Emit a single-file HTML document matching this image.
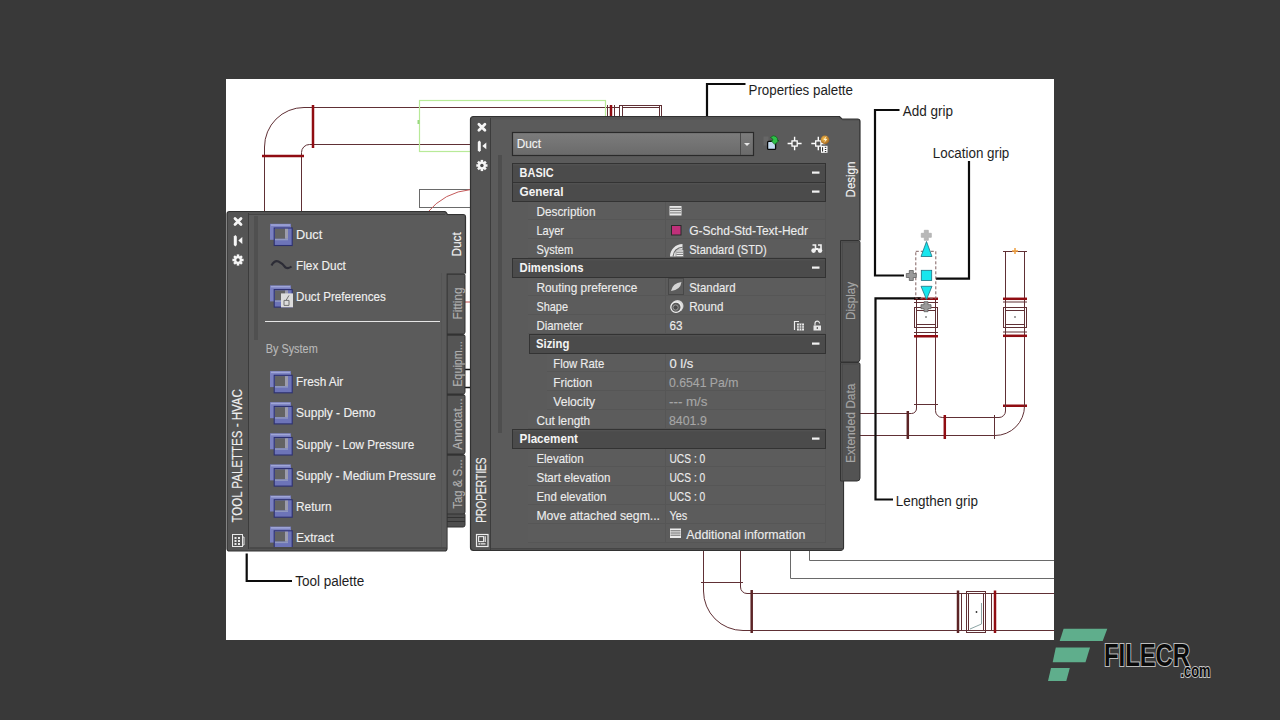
<!DOCTYPE html><html><head><meta charset="utf-8"><style>
html,body{margin:0;padding:0;width:1280px;height:720px;overflow:hidden;background:#393939;}
svg{position:absolute;left:0;top:0;}
text{font-family:"Liberation Sans", sans-serif;}
</style></head><body>
<svg width="1280" height="720" viewBox="0 0 1280 720">
<rect x="226" y="79" width="828" height="561" fill="#ffffff"/>
<path d="M304 107.5 A39.5 39.5 0 0 0 264.5 147 L264.5 212" stroke="#603035" stroke-width="1" fill="none" />
<path d="M309.5 144.5 A8 8 0 0 0 301.5 152.5 L301.5 212" stroke="#603035" stroke-width="1" fill="none" />
<line x1="304" y1="107.5" x2="619" y2="107.5" stroke="#603035" stroke-width="1"/>
<line x1="309.5" y1="144.5" x2="470" y2="144.5" stroke="#603035" stroke-width="1"/>
<line x1="313" y1="105" x2="313" y2="148" stroke="#900c12" stroke-width="2.5"/>
<line x1="262" y1="156" x2="304" y2="156" stroke="#900c12" stroke-width="2.5"/>
<rect x="419.5" y="100.5" width="186" height="51" stroke="#b8ea98" stroke-width="1.2" fill="none" />
<line x1="418.5" y1="120" x2="418.5" y2="124" stroke="#9ad880" stroke-width="2"/>
<line x1="607.5" y1="105" x2="607.5" y2="117" stroke="#603035" stroke-width="1"/>
<line x1="611" y1="105" x2="611" y2="117" stroke="#900c12" stroke-width="2.5"/>
<line x1="614.5" y1="105" x2="614.5" y2="117" stroke="#603035" stroke-width="1"/>
<line x1="619.5" y1="105" x2="619.5" y2="117" stroke="#603035" stroke-width="1"/>
<line x1="622.5" y1="105" x2="622.5" y2="117" stroke="#603035" stroke-width="1"/>
<line x1="659.5" y1="105" x2="659.5" y2="117" stroke="#603035" stroke-width="1"/>
<line x1="661.5" y1="105" x2="661.5" y2="117" stroke="#603035" stroke-width="1"/>
<line x1="619.5" y1="105.5" x2="661.5" y2="105.5" stroke="#603035" stroke-width="1"/>
<line x1="622.5" y1="107.5" x2="659.5" y2="107.5" stroke="#603035" stroke-width="1"/>
<rect x="419.5" y="189.5" width="60" height="18" stroke="#6a6a6a" stroke-width="1" fill="none" />
<path d="M427 213 A65 65 0 0 1 471 189.5" stroke="#c45a5a" stroke-width="1" fill="none" />
<line x1="465" y1="302" x2="470" y2="302" stroke="#c04848" stroke-width="1"/>
<line x1="465" y1="369.5" x2="470" y2="369.5" stroke="#101010" stroke-width="1.5"/>
<line x1="465" y1="387.5" x2="470" y2="387.5" stroke="#101010" stroke-width="1.5"/>
<path d="M703.5 551 L703.5 591 A39.5 39.5 0 0 0 743 630.5 L1054 630.5" stroke="#603035" stroke-width="1" fill="none" />
<path d="M740.5 551 L740.5 587 A6.5 6.5 0 0 0 747 593.5 L1054 593.5" stroke="#603035" stroke-width="1" fill="none" />
<line x1="701" y1="582.5" x2="743" y2="582.5" stroke="#603035" stroke-width="1"/>
<line x1="751.7" y1="590" x2="751.7" y2="633" stroke="#5c2426" stroke-width="2.5"/>
<path d="M790.5 551 L790.5 578.5 L1054 578.5" stroke="#6a6a6a" stroke-width="1" fill="none" />
<path d="M809.5 551 L809.5 560.5 L1054 560.5" stroke="#6a6a6a" stroke-width="1" fill="none" />
<line x1="958" y1="590.5" x2="958" y2="633" stroke="#5c2426" stroke-width="2.5"/>
<line x1="995" y1="590.5" x2="995" y2="633" stroke="#900c12" stroke-width="2.5"/>
<line x1="961.5" y1="593" x2="961.5" y2="631" stroke="#603035" stroke-width="1"/>
<line x1="991.5" y1="593" x2="991.5" y2="631" stroke="#603035" stroke-width="1"/>
<rect x="966.5" y="591.5" width="19" height="41" stroke="#603035" stroke-width="1" fill="none" />
<rect x="968.5" y="593.5" width="15" height="37" stroke="#603035" stroke-width="1" fill="none" />
<path d="M970 629 L981.5 624 L981.5 603" stroke="#6e8e8e" stroke-width="0.8" fill="none" />
<circle cx="976.5" cy="612" r="0.9" fill="#303030"/>
<line x1="916.5" y1="298" x2="916.5" y2="408" stroke="#603035" stroke-width="1"/>
<line x1="935.5" y1="298" x2="935.5" y2="410.5" stroke="#603035" stroke-width="1"/>
<line x1="914" y1="298.75" x2="938" y2="298.75" stroke="#900c12" stroke-width="2.5"/>
<line x1="914" y1="302.5" x2="938" y2="302.5" stroke="#603035" stroke-width="1"/>
<rect x="914.5" y="307.5" width="23" height="20" stroke="#603035" stroke-width="1" fill="none" />
<rect x="916.5" y="310.5" width="19" height="14" stroke="#603035" stroke-width="1" fill="none" />
<line x1="914" y1="332.5" x2="938" y2="332.5" stroke="#603035" stroke-width="1"/>
<line x1="914" y1="336.25" x2="938" y2="336.25" stroke="#900c12" stroke-width="2.5"/>
<line x1="914" y1="404.5" x2="938" y2="404.5" stroke="#603035" stroke-width="1"/>
<path d="M916.5 408 A5 5 0 0 1 911.5 413.5 L860 413.5" stroke="#603035" stroke-width="1" fill="none" />
<path d="M935.5 410.5 A6.8 6.8 0 0 0 942.3 417.5 L999 417.5 A6.5 6.5 0 0 0 1005.5 411" stroke="#603035" stroke-width="1" fill="none" />
<path d="M860 435.5 L995 435.5 A29.5 29.5 0 0 0 1024.5 406" stroke="#603035" stroke-width="1" fill="none" />
<line x1="907.8" y1="411" x2="907.8" y2="439" stroke="#5c2426" stroke-width="2.5"/>
<line x1="944.8" y1="415" x2="944.8" y2="439" stroke="#900c12" stroke-width="2.5"/>
<line x1="994.5" y1="415" x2="994.5" y2="439" stroke="#603035" stroke-width="1"/>
<line x1="1003" y1="405.75" x2="1027" y2="405.75" stroke="#900c12" stroke-width="2.5"/>
<line x1="1005.5" y1="251" x2="1005.5" y2="411" stroke="#603035" stroke-width="1"/>
<line x1="1024.5" y1="251" x2="1024.5" y2="406.5" stroke="#603035" stroke-width="1"/>
<line x1="1003" y1="251.5" x2="1027" y2="251.5" stroke="#603035" stroke-width="1"/>
<line x1="1003" y1="298.8" x2="1027" y2="298.8" stroke="#900c12" stroke-width="2.5"/>
<line x1="1003" y1="302" x2="1027" y2="302" stroke="#603035" stroke-width="1"/>
<rect x="1003.5" y="307.5" width="23" height="20" stroke="#603035" stroke-width="1" fill="none" />
<rect x="1005.5" y="310.5" width="19" height="14" stroke="#603035" stroke-width="1" fill="none" />
<line x1="1003" y1="332" x2="1027" y2="332" stroke="#603035" stroke-width="1"/>
<line x1="1003" y1="335.8" x2="1027" y2="335.8" stroke="#900c12" stroke-width="2.5"/>
<path d="M1012 251 h6 M1015 248 v6" stroke="#f0a040" stroke-width="1.5"/>
<circle cx="926" cy="317" r="0.8" fill="#303030"/>
<circle cx="1015" cy="317" r="0.8" fill="#303030"/>
<path d="M707 117 L707 84 L745.5 84" stroke="#0c0c0c" stroke-width="2.2" fill="none" />
<path d="M899.5 110 L875 110 L875 275.5 L904 275.5" stroke="#0c0c0c" stroke-width="2.2" fill="none" />
<path d="M936 278.7 L969 278.7 L969 161" stroke="#0c0c0c" stroke-width="2.2" fill="none" />
<path d="M921 298.3 L875.5 298.3 L875.5 499.5 L893 499.5" stroke="#0c0c0c" stroke-width="2.2" fill="none" />
<path d="M246.7 553.5 L246.7 581 L292 581" stroke="#0c0c0c" stroke-width="2.2" fill="none" />
<rect x="915.8" y="251.3" width="20" height="47" stroke="#806060" stroke-width="1" fill="none" stroke-dasharray="3,2"/>
<path d="M924.3 230.3 H928.3 V233.3 H931.3 V237.3 H928.3 V240.3 H924.3 V237.3 H921.3 V233.3 H924.3 Z" fill="#b8b8b8" stroke="#b0b0b0" stroke-width="0.8"/>
<path d="M926.5 241.5 L932 256.5 L921 256.5 Z" fill="#18e6ee" stroke="#207080" stroke-width="0.8"/>
<rect x="921.3" y="270.3" width="10.4" height="10.2" fill="#18e6ee" stroke="#207080" stroke-width="0.8"/>
<path d="M921 286.3 L932 286.3 L926.5 299.5 Z" fill="#18e6ee" stroke="#207080" stroke-width="0.8"/>
<path d="M909.3 270.5 H913.3 V273.5 H916.3 V277.5 H913.3 V280.5 H909.3 V277.5 H906.3 V273.5 H909.3 Z" fill="#9a9a9a" stroke="#606060" stroke-width="0.8"/>
<path d="M924.0 301.7 H928.0 V304.7 H931.0 V308.7 H928.0 V311.7 H924.0 V308.7 H921.0 V304.7 H924.0 Z" fill="#9a9a9a" stroke="#606060" stroke-width="0.8"/>
<text transform="translate(748.5,95) scale(1,1.06)" x="0" y="0" font-size="13" fill="#1e1e1e" font-weight="normal" textLength="104.5" lengthAdjust="spacingAndGlyphs" >Properties palette</text>
<text transform="translate(902.8,115.5) scale(1,1.06)" x="0" y="0" font-size="13" fill="#1e1e1e" font-weight="normal" textLength="50.2" lengthAdjust="spacingAndGlyphs" >Add grip</text>
<text transform="translate(932.8,157.8) scale(1,1.06)" x="0" y="0" font-size="13" fill="#1e1e1e" font-weight="normal" textLength="76.5" lengthAdjust="spacingAndGlyphs" >Location grip</text>
<text transform="translate(895.7,506.2) scale(1,1.06)" x="0" y="0" font-size="13" fill="#1e1e1e" font-weight="normal" textLength="82.2" lengthAdjust="spacingAndGlyphs" >Lengthen grip</text>
<text transform="translate(295.2,585.5) scale(1,1.06)" x="0" y="0" font-size="13" fill="#1e1e1e" font-weight="normal" textLength="69" lengthAdjust="spacingAndGlyphs" >Tool palette</text>
<path d="M445 513 H463 a2 2 0 0 1 2 2 V525 a2 2 0 0 1 -2 2 H445 Z" fill="#4e4e4e" stroke="#323232" stroke-width="1"/>
<path d="M446 517.5 H465 M446 521.5 H465" stroke="#323232" stroke-width="1"/>
<path d="M445.5 273.5 H463 a2 2 0 0 1 2 2 V332 a2 2 0 0 1 -2 2 H445.5 Z" fill="#555555" stroke="#323232" stroke-width="1"/>
<line x1="446" y1="274.5" x2="464" y2="274.5" stroke="#3c3c3c" stroke-width="1"/>
<path d="M445.5 334.5 H463 a2 2 0 0 1 2 2 V392 a2 2 0 0 1 -2 2 H445.5 Z" fill="#555555" stroke="#323232" stroke-width="1"/>
<line x1="446" y1="335.5" x2="464" y2="335.5" stroke="#3c3c3c" stroke-width="1"/>
<path d="M445.5 394.5 H463 a2 2 0 0 1 2 2 V452 a2 2 0 0 1 -2 2 H445.5 Z" fill="#555555" stroke="#323232" stroke-width="1"/>
<line x1="446" y1="395.5" x2="464" y2="395.5" stroke="#3c3c3c" stroke-width="1"/>
<path d="M445.5 454.5 H463 a2 2 0 0 1 2 2 V512 a2 2 0 0 1 -2 2 H445.5 Z" fill="#555555" stroke="#323232" stroke-width="1"/>
<line x1="446" y1="455.5" x2="464" y2="455.5" stroke="#3c3c3c" stroke-width="1"/>
<path d="M229.5 211.5 H444.5 a2 2 0 0 1 1.6 0.8 L447.5 214.5 H463 a2.5 2.5 0 0 1 2.5 2.5 V273 H447 V548.5 a2.5 2.5 0 0 1 -2.5 2.5 H229.5 a2.5 2.5 0 0 1 -2.5 -2.5 V214 a2.5 2.5 0 0 1 2.5 -2.5 Z" fill="#545454" stroke="#323232" stroke-width="1.2"/>
<path d="M249 214 H444.5 L446.5 215.5 H464.5 V273.5 H446.5 V547.5 H249 Z" fill="#5b5b5b"/>
<line x1="248.5" y1="213" x2="248.5" y2="549" stroke="#3c3c3c" stroke-width="1"/>
<line x1="249" y1="214.5" x2="445" y2="214.5" stroke="#444444" stroke-width="1"/>
<line x1="249.5" y1="548" x2="446" y2="548" stroke="#464646" stroke-width="1.5"/>
<line x1="441.5" y1="273" x2="441.5" y2="547" stroke="#555555" stroke-width="1"/>
<rect x="254" y="216" width="4" height="124" fill="#505050"/>
<path d="M235.0 218.6 L241.0 224.6 M241.0 218.6 L235.0 224.6" stroke="#f6f6f6" stroke-width="2.8" stroke-linecap="round"/>
<path d="M233.8 236.6 L235.3 235.1 L236.8 236.6 V245.1 L235.3 246.6 L233.8 245.1 Z" fill="#f6f6f6"/>
<path d="M242.3 237.1 V243.9 L238.3 240.6 Z" fill="#f6f6f6"/>
<g transform="translate(238,260)"><circle r="3.9" fill="#f6f6f6"/><rect x="-1.25" y="-5.6" width="2.5" height="11.2" fill="#f6f6f6" transform="rotate(0)"/><rect x="-1.25" y="-5.6" width="2.5" height="11.2" fill="#f6f6f6" transform="rotate(45)"/><rect x="-1.25" y="-5.6" width="2.5" height="11.2" fill="#f6f6f6" transform="rotate(90)"/><rect x="-1.25" y="-5.6" width="2.5" height="11.2" fill="#f6f6f6" transform="rotate(135)"/><circle r="1.7" fill="#4a4a4a"/></g>
<text transform="translate(242.4,522.6) rotate(-90) scale(1,1.2)" font-size="11.5" fill="#eeeeee" font-weight="normal" text-anchor="start" textLength="133.5" lengthAdjust="spacingAndGlyphs" stroke="#eeeeee" stroke-width="0.12">TOOL PALETTES - HVAC</text>
<rect x="232.5" y="534.5" width="10" height="12" fill="none" stroke="#e8e8e8" stroke-width="1"/>
<path d="M242.5 537 h1.5 v8 h-1.5" fill="none" stroke="#e8e8e8" stroke-width="1"/>
<rect x="234.5" y="537" width="2" height="2" fill="#e8e8e8"/>
<rect x="238.0" y="537" width="2" height="2" fill="#e8e8e8"/>
<rect x="234.5" y="540" width="2" height="2" fill="#e8e8e8"/>
<rect x="238.0" y="540" width="2" height="2" fill="#e8e8e8"/>
<rect x="234.5" y="543" width="2" height="2" fill="#e8e8e8"/>
<rect x="238.0" y="543" width="2" height="2" fill="#e8e8e8"/>
<text transform="translate(461.5,303.5) rotate(-90) scale(1,1.08)" font-size="11.8" fill="#b0b0b0" font-weight="normal" text-anchor="middle" textLength="32" lengthAdjust="spacingAndGlyphs" stroke="#b0b0b0" stroke-width="0.12">Fitting</text>
<text transform="translate(461.5,364.0) rotate(-90) scale(1,1.08)" font-size="11.8" fill="#b0b0b0" font-weight="normal" text-anchor="middle" textLength="45.7" lengthAdjust="spacingAndGlyphs" stroke="#b0b0b0" stroke-width="0.12">Equipm...</text>
<text transform="translate(461.5,424.0) rotate(-90) scale(1,1.08)" font-size="11.8" fill="#b0b0b0" font-weight="normal" text-anchor="middle" textLength="51.5" lengthAdjust="spacingAndGlyphs" stroke="#b0b0b0" stroke-width="0.12">Annotat...</text>
<text transform="translate(461.5,484.0) rotate(-90) scale(1,1.08)" font-size="11.8" fill="#b0b0b0" font-weight="normal" text-anchor="middle" textLength="49.3" lengthAdjust="spacingAndGlyphs" stroke="#b0b0b0" stroke-width="0.12">Tag &amp; S...</text>
<text transform="translate(460.5,244.4) rotate(-90) scale(1,1.08)" font-size="12" fill="#f6f6f6" font-weight="normal" text-anchor="middle" textLength="24.4" lengthAdjust="spacingAndGlyphs" stroke="#f6f6f6" stroke-width="0.12">Duct</text>
<defs><clipPath id="tpc"><rect x="249" y="214" width="197" height="333"/></clipPath></defs><g clip-path="url(#tpc)">
<rect x="270" y="223.8" width="21" height="16" fill="#7a80c0"/>
<rect x="271" y="224.3" width="19" height="1.5" fill="#a0a6d8"/>
<rect x="274.2" y="228.0" width="18" height="17.5" fill="#6d74b8" stroke="#2c3070" stroke-width="1.1"/>
<rect x="275" y="228.8" width="11" height="10" fill="#636363"/>
<rect x="285" y="228.8" width="3" height="10" fill="#9c9cac"/>
<rect x="275" y="238.8" width="13" height="1.5" fill="#9098c0"/>
<text transform="translate(296.0,239) scale(1,1.1)" x="0" y="0" font-size="11.8" fill="#f0f0f0" font-weight="normal" textLength="26.2" lengthAdjust="spacingAndGlyphs" stroke="#f0f0f0" stroke-width="0.12" >Duct</text>
<path d="M271.5 265.5 Q274.5 260 278.5 261.5 Q282 263 285.5 267.5 Q288.5 269 291.5 266.5" stroke="#2c2c36" stroke-width="2.2" fill="none"/>
<text transform="translate(296.0,270) scale(1,1.1)" x="0" y="0" font-size="11.8" fill="#f0f0f0" font-weight="normal" textLength="49.8" lengthAdjust="spacingAndGlyphs" stroke="#f0f0f0" stroke-width="0.12" >Flex Duct</text>
<rect x="270" y="285.40000000000003" width="21" height="16" fill="#7a80c0"/>
<rect x="271" y="285.90000000000003" width="19" height="1.5" fill="#a0a6d8"/>
<rect x="274.2" y="289.6" width="18" height="17.5" fill="#6d74b8" stroke="#2c3070" stroke-width="1.1"/>
<rect x="275" y="290.40000000000003" width="11" height="10" fill="#636363"/>
<rect x="285" y="290.40000000000003" width="3" height="10" fill="#9c9cac"/>
<rect x="275" y="300.40000000000003" width="13" height="1.5" fill="#9098c0"/>
<rect x="281" y="293.40000000000003" width="12" height="14" fill="#dcdcdc"/>
<path d="M284 305.40000000000003 v-5 h5 v5 z M289 295.40000000000003 l-3 5" stroke="#707070" stroke-width="1" fill="none"/>
<text transform="translate(296.0,300.6) scale(1,1.1)" x="0" y="0" font-size="11.8" fill="#f0f0f0" font-weight="normal" textLength="89.8" lengthAdjust="spacingAndGlyphs" stroke="#f0f0f0" stroke-width="0.12" >Duct Preferences</text>
<rect x="270" y="371.1" width="21" height="16" fill="#7a80c0"/>
<rect x="271" y="371.6" width="19" height="1.5" fill="#a0a6d8"/>
<rect x="274.2" y="375.3" width="18" height="17.5" fill="#6d74b8" stroke="#2c3070" stroke-width="1.1"/>
<rect x="275" y="376.1" width="11" height="10" fill="#636363"/>
<rect x="285" y="376.1" width="3" height="10" fill="#9c9cac"/>
<rect x="275" y="386.1" width="13" height="1.5" fill="#9098c0"/>
<text transform="translate(296.0,386.3) scale(1,1.1)" x="0" y="0" font-size="11.8" fill="#f0f0f0" font-weight="normal" textLength="47.3" lengthAdjust="spacingAndGlyphs" stroke="#f0f0f0" stroke-width="0.12" >Fresh Air</text>
<rect x="270" y="402.2" width="21" height="16" fill="#7a80c0"/>
<rect x="271" y="402.7" width="19" height="1.5" fill="#a0a6d8"/>
<rect x="274.2" y="406.4" width="18" height="17.5" fill="#6d74b8" stroke="#2c3070" stroke-width="1.1"/>
<rect x="275" y="407.2" width="11" height="10" fill="#636363"/>
<rect x="285" y="407.2" width="3" height="10" fill="#9c9cac"/>
<rect x="275" y="417.2" width="13" height="1.5" fill="#9098c0"/>
<text transform="translate(296.0,417.4) scale(1,1.1)" x="0" y="0" font-size="11.8" fill="#f0f0f0" font-weight="normal" textLength="79.5" lengthAdjust="spacingAndGlyphs" stroke="#f0f0f0" stroke-width="0.12" >Supply - Demo</text>
<rect x="270" y="433.3" width="21" height="16" fill="#7a80c0"/>
<rect x="271" y="433.8" width="19" height="1.5" fill="#a0a6d8"/>
<rect x="274.2" y="437.5" width="18" height="17.5" fill="#6d74b8" stroke="#2c3070" stroke-width="1.1"/>
<rect x="275" y="438.3" width="11" height="10" fill="#636363"/>
<rect x="285" y="438.3" width="3" height="10" fill="#9c9cac"/>
<rect x="275" y="448.3" width="13" height="1.5" fill="#9098c0"/>
<text transform="translate(296.0,448.5) scale(1,1.1)" x="0" y="0" font-size="11.8" fill="#f0f0f0" font-weight="normal" textLength="118.3" lengthAdjust="spacingAndGlyphs" stroke="#f0f0f0" stroke-width="0.12" >Supply - Low Pressure</text>
<rect x="270" y="464.40000000000003" width="21" height="16" fill="#7a80c0"/>
<rect x="271" y="464.90000000000003" width="19" height="1.5" fill="#a0a6d8"/>
<rect x="274.2" y="468.6" width="18" height="17.5" fill="#6d74b8" stroke="#2c3070" stroke-width="1.1"/>
<rect x="275" y="469.40000000000003" width="11" height="10" fill="#636363"/>
<rect x="285" y="469.40000000000003" width="3" height="10" fill="#9c9cac"/>
<rect x="275" y="479.40000000000003" width="13" height="1.5" fill="#9098c0"/>
<text transform="translate(296.0,479.6) scale(1,1.1)" x="0" y="0" font-size="11.8" fill="#f0f0f0" font-weight="normal" textLength="139.8" lengthAdjust="spacingAndGlyphs" stroke="#f0f0f0" stroke-width="0.12" >Supply - Medium Pressure</text>
<rect x="270" y="495.5" width="21" height="16" fill="#7a80c0"/>
<rect x="271" y="496.0" width="19" height="1.5" fill="#a0a6d8"/>
<rect x="274.2" y="499.7" width="18" height="17.5" fill="#6d74b8" stroke="#2c3070" stroke-width="1.1"/>
<rect x="275" y="500.5" width="11" height="10" fill="#636363"/>
<rect x="285" y="500.5" width="3" height="10" fill="#9c9cac"/>
<rect x="275" y="510.5" width="13" height="1.5" fill="#9098c0"/>
<text transform="translate(296.0,510.7) scale(1,1.1)" x="0" y="0" font-size="11.8" fill="#f0f0f0" font-weight="normal" textLength="35.599999999999994" lengthAdjust="spacingAndGlyphs" stroke="#f0f0f0" stroke-width="0.12" >Return</text>
<rect x="270" y="526.5999999999999" width="21" height="16" fill="#7a80c0"/>
<rect x="271" y="527.0999999999999" width="19" height="1.5" fill="#a0a6d8"/>
<rect x="274.2" y="530.8" width="18" height="17.5" fill="#6d74b8" stroke="#2c3070" stroke-width="1.1"/>
<rect x="275" y="531.5999999999999" width="11" height="10" fill="#636363"/>
<rect x="285" y="531.5999999999999" width="3" height="10" fill="#9c9cac"/>
<rect x="275" y="541.5999999999999" width="13" height="1.5" fill="#9098c0"/>
<text transform="translate(296.0,541.8) scale(1,1.1)" x="0" y="0" font-size="11.8" fill="#f0f0f0" font-weight="normal" textLength="37.8" lengthAdjust="spacingAndGlyphs" stroke="#f0f0f0" stroke-width="0.12" >Extract</text>
</g>
<line x1="265" y1="321.5" x2="440" y2="321.5" stroke="#e6e6e6" stroke-width="1.2"/>
<text transform="translate(265.7,352.5) scale(1,1.08)" x="0" y="0" font-size="11.5" fill="#b8b8b8" font-weight="normal" textLength="52" lengthAdjust="spacingAndGlyphs" stroke="#b8b8b8" stroke-width="0.12" >By System</text>
<path d="M473.5 116.5 H839.5 L842 119 H857.5 a2.5 2.5 0 0 1 2.5 2.5 V240 H843.5 V547.5 a3 3 0 0 1 -3 3 H473.5 a3 3 0 0 1 -3 -3 V119.5 a3 3 0 0 1 3 -3 Z" fill="#545454" stroke="#323232" stroke-width="1.2"/>
<path d="M491 119.5 H841.5 L843 121 H859 V240.5 H843 V549.5 H491 Z" fill="#5b5b5b"/>
<path d="M840.5 240.5 H858 a2 2 0 0 1 2 2 V359 a3 3 0 0 1 -3 3 H840.5 Z" fill="#535353" stroke="#323232" stroke-width="1"/>
<path d="M841.5 242 H858.5 M842.5 242 V361" stroke="#4a4a4a" stroke-width="1"/>
<path d="M840.5 362.5 H858 a2 2 0 0 1 2 2 V478 a3 3 0 0 1 -3 3 H840.5 Z" fill="#535353" stroke="#323232" stroke-width="1"/>
<path d="M841.5 364 H858.5 M842.5 364 V480" stroke="#4a4a4a" stroke-width="1"/>
<line x1="490.5" y1="118" x2="490.5" y2="550" stroke="#3c3c3c" stroke-width="1"/>
<line x1="491" y1="548.8" x2="843" y2="548.8" stroke="#464646" stroke-width="1.5"/>
<rect x="498" y="155" width="4" height="278" fill="#4e4e4e"/>
<path d="M478.9 124.2 L484.9 130.2 M484.9 124.2 L478.9 130.2" stroke="#f6f6f6" stroke-width="2.8" stroke-linecap="round"/>
<path d="M477.8 142 L479.3 140.5 L480.8 142 V150.5 L479.3 152 L477.8 150.5 Z" fill="#f6f6f6"/>
<path d="M486.3 142.5 V149.3 L482.3 146 Z" fill="#f6f6f6"/>
<g transform="translate(481.9,165.5)"><circle r="3.9" fill="#f6f6f6"/><rect x="-1.25" y="-5.6" width="2.5" height="11.2" fill="#f6f6f6" transform="rotate(0)"/><rect x="-1.25" y="-5.6" width="2.5" height="11.2" fill="#f6f6f6" transform="rotate(45)"/><rect x="-1.25" y="-5.6" width="2.5" height="11.2" fill="#f6f6f6" transform="rotate(90)"/><rect x="-1.25" y="-5.6" width="2.5" height="11.2" fill="#f6f6f6" transform="rotate(135)"/><circle r="1.7" fill="#4a4a4a"/></g>
<text transform="translate(485.8,522.8) rotate(-90) scale(1,1.18)" font-size="11.8" fill="#eeeeee" font-weight="normal" text-anchor="start" textLength="65.4" lengthAdjust="spacingAndGlyphs" stroke="#eeeeee" stroke-width="0.12">PROPERTIES</text>
<rect x="476.5" y="534.5" width="11.5" height="12" fill="none" stroke="#ececec" stroke-width="1.2"/>
<rect x="478.6" y="536.6" width="5" height="5" fill="none" stroke="#ececec" stroke-width="1.1"/>
<path d="M485.2 536.2 v5.8 M480.5 543.8 h5 M479.2 543 v1.8" stroke="#ececec" stroke-width="1.2"/>
<text transform="translate(855,179.5) rotate(-90) scale(1,1.08)" font-size="12" fill="#f2f2f2" font-weight="normal" text-anchor="middle" textLength="35.9" lengthAdjust="spacingAndGlyphs" stroke="#f2f2f2" stroke-width="0.12">Design</text>
<text transform="translate(855,301) rotate(-90) scale(1,1.08)" font-size="12" fill="#a6a6a6" font-weight="normal" text-anchor="middle" textLength="38" lengthAdjust="spacingAndGlyphs" stroke="#a6a6a6" stroke-width="0.12">Display</text>
<text transform="translate(855,423.2) rotate(-90) scale(1,1.08)" font-size="12" fill="#a6a6a6" font-weight="normal" text-anchor="middle" textLength="79.4" lengthAdjust="spacingAndGlyphs" stroke="#a6a6a6" stroke-width="0.12">Extended Data</text>
<defs><linearGradient id="cg" x1="0" y1="0" x2="0" y2="1"><stop offset="0" stop-color="#7c7c7c"/><stop offset="1" stop-color="#6a6a6a"/></linearGradient></defs>
<rect x="512.5" y="132.5" width="241" height="23" fill="url(#cg)" stroke="#2a2a2a" stroke-width="1.2"/>
<line x1="740.5" y1="133" x2="740.5" y2="155" stroke="#4a4a4a" stroke-width="1"/>
<path d="M744 143 h6 l-3 3 z" fill="#e8e8e8"/>
<text transform="translate(516.7,147.8) scale(1,1.08)" x="0" y="0" font-size="12" fill="#f2f2f2" font-weight="normal" textLength="24.4" lengthAdjust="spacingAndGlyphs" stroke="#f2f2f2" stroke-width="0.12" >Duct</text>
<rect x="763.5" y="136.5" width="5" height="9" fill="#666666"/>
<rect x="767.6" y="141.4" width="8" height="8" rx="1" fill="#c4dcf2" stroke="#080808" stroke-width="1.3"/>
<path d="M770.5 137.5 Q773 134.5 776 136.5 Q778 138.5 777.5 140.5 H779 L774.8 144.5 L770.8 140.5 H772.5 Q773.5 139 772 138.5 Z" fill="#2ec048" stroke="#0b5a18" stroke-width="0.7"/>
<path d="M787.6 143.5 H792.0 M797.2 143.5 H801.6 M794.6 136.7 V140.9 M794.6 146.1 V150.3" stroke="#ffffff" stroke-width="1.4"/>
<rect x="792.0" y="140.9" width="5.2" height="5.2" fill="#555555" stroke="#ffffff" stroke-width="1.3"/>
<path d="M811.3 143.5 H815.6999999999999 M820.9 143.5 H825.3 M818.3 136.7 V140.9 M818.3 146.1 V150.3" stroke="#ffffff" stroke-width="1.4"/>
<rect x="815.6999999999999" y="140.9" width="5.2" height="5.2" fill="#555555" stroke="#ffffff" stroke-width="1.3"/>
<defs><radialGradient id="og" cx="0.4" cy="0.4" r="0.6"><stop offset="0" stop-color="#f8c050"/><stop offset="1" stop-color="#a86a20"/></radialGradient></defs>
<circle cx="825" cy="139.7" r="4.3" fill="url(#og)"/>
<path d="M826.2 136.3 l-2.8 3.6 h2 l-1.3 3.2 l3.2 -4 h-2 l1.2 -2.8 z" fill="#fff4d0"/>
<rect x="821" y="145.8" width="6.5" height="7" fill="#ffffff"/>
<path d="M822.6 147.2 v4.4 M824.8 147.3 h1.5 M824.8 149.5 h1.5 M824.8 151.6 h1.5" stroke="#202020" stroke-width="1"/>
<rect x="528" y="201" width="298" height="19" fill="#5c5c5c"/>
<line x1="528" y1="219.5" x2="826" y2="219.5" stroke="#565656" stroke-width="1"/>
<line x1="665.5" y1="201" x2="665.5" y2="220" stroke="#565656" stroke-width="1"/>
<line x1="825.5" y1="201" x2="825.5" y2="220" stroke="#565656" stroke-width="1"/>
<text transform="translate(536.4,216.3) scale(1,1.08)" x="0" y="0" font-size="12" fill="#ececec" font-weight="normal" textLength="59.1" lengthAdjust="spacingAndGlyphs" stroke="#ececec" stroke-width="0.12" >Description</text>
<rect x="669.5" y="206" width="12" height="9.5" fill="#e8e8e8"/><path d="M670 208.3 h11 M670 210.6 h11 M670 212.9 h11" stroke="#6a6a6a" stroke-width="0.9"/>
<rect x="528" y="220" width="298" height="19" fill="#5c5c5c"/>
<line x1="528" y1="238.5" x2="826" y2="238.5" stroke="#565656" stroke-width="1"/>
<line x1="665.5" y1="220" x2="665.5" y2="239" stroke="#565656" stroke-width="1"/>
<line x1="825.5" y1="220" x2="825.5" y2="239" stroke="#565656" stroke-width="1"/>
<text transform="translate(536.4,235.3) scale(1,1.08)" x="0" y="0" font-size="12" fill="#ececec" font-weight="normal" textLength="27.6" lengthAdjust="spacingAndGlyphs" stroke="#ececec" stroke-width="0.12" >Layer</text>
<text transform="translate(689.2,235.3) scale(1,1.08)" x="0" y="0" font-size="12" fill="#ececec" font-weight="normal" textLength="118.75" lengthAdjust="spacingAndGlyphs" stroke="#ececec" stroke-width="0.12" >G-Schd-Std-Text-Hedr</text>
<rect x="671.5" y="225.5" width="9.5" height="9.5" fill="#c0307a" stroke="#2a2a2a" stroke-width="1"/>
<rect x="528" y="239" width="298" height="19" fill="#5c5c5c"/>
<line x1="528" y1="257.5" x2="826" y2="257.5" stroke="#565656" stroke-width="1"/>
<line x1="665.5" y1="239" x2="665.5" y2="258" stroke="#565656" stroke-width="1"/>
<line x1="825.5" y1="239" x2="825.5" y2="258" stroke="#565656" stroke-width="1"/>
<text transform="translate(536.4,254.3) scale(1,1.08)" x="0" y="0" font-size="12" fill="#ececec" font-weight="normal" textLength="36.8" lengthAdjust="spacingAndGlyphs" stroke="#ececec" stroke-width="0.12" >System</text>
<text transform="translate(689.2,254.3) scale(1,1.08)" x="0" y="0" font-size="12" fill="#ececec" font-weight="normal" textLength="77.4" lengthAdjust="spacingAndGlyphs" stroke="#ececec" stroke-width="0.12" >Standard (STD)</text>
<path d="M670.0 256.5 A12.5 12.5 0 0 1 682.5 244.0 V256.5 Z" fill="#e6e6e6"/>
<path d="M673.2 256.5 A9.3 9.3 0 0 1 682.5 247.2 M676.5 256.5 A6 6 0 0 1 682.5 250.5" stroke="#6a6a6a" stroke-width="1.1" fill="none"/>
<rect x="676" y="250" width="7.5" height="6.5" fill="#f0f0f0" stroke="#5a5a5a" stroke-width="0.5"/>
<path d="M676.5 252.2 h6.5 M676.5 254.4 h6.5" stroke="#555" stroke-width="0.8"/>
<path d="M812.5 245 h3 v4 M818 245 h3 v4" stroke="#f2f2f2" stroke-width="1.6" fill="none"/>
<circle cx="813.6" cy="250.6" r="2.3" fill="#f2f2f2"/><circle cx="820" cy="250.6" r="2.3" fill="#f2f2f2"/><rect x="815" y="248" width="3.5" height="2" fill="#f2f2f2"/>
<rect x="528" y="277" width="298" height="19" fill="#5c5c5c"/>
<line x1="528" y1="295.5" x2="826" y2="295.5" stroke="#565656" stroke-width="1"/>
<line x1="665.5" y1="277" x2="665.5" y2="296" stroke="#565656" stroke-width="1"/>
<line x1="825.5" y1="277" x2="825.5" y2="296" stroke="#565656" stroke-width="1"/>
<text transform="translate(536.4,292.3) scale(1,1.08)" x="0" y="0" font-size="12" fill="#ececec" font-weight="normal" textLength="100.9" lengthAdjust="spacingAndGlyphs" stroke="#ececec" stroke-width="0.12" >Routing preference</text>
<text transform="translate(689.2,292.3) scale(1,1.08)" x="0" y="0" font-size="12" fill="#ececec" font-weight="normal" textLength="46.3" lengthAdjust="spacingAndGlyphs" stroke="#ececec" stroke-width="0.12" >Standard</text>
<rect x="668.5" y="278.5" width="15" height="16" fill="none" stroke="#484848" stroke-width="1"/>
<path d="M671 291 Q672.5 283 681.5 282 Q680.5 290 671 291 Z" fill="#d4d4d4"/>
<rect x="528" y="296" width="298" height="19" fill="#5c5c5c"/>
<line x1="528" y1="314.5" x2="826" y2="314.5" stroke="#565656" stroke-width="1"/>
<line x1="665.5" y1="296" x2="665.5" y2="315" stroke="#565656" stroke-width="1"/>
<line x1="825.5" y1="296" x2="825.5" y2="315" stroke="#565656" stroke-width="1"/>
<text transform="translate(536.4,311.3) scale(1,1.08)" x="0" y="0" font-size="12" fill="#ececec" font-weight="normal" textLength="31.6" lengthAdjust="spacingAndGlyphs" stroke="#ececec" stroke-width="0.12" >Shape</text>
<text transform="translate(689.2,311.3) scale(1,1.08)" x="0" y="0" font-size="12" fill="#ececec" font-weight="normal" textLength="34.3" lengthAdjust="spacingAndGlyphs" stroke="#ececec" stroke-width="0.12" >Round</text>
<circle cx="677.5" cy="306" r="6" fill="#d8d8d8"/><circle cx="676" cy="307.2" r="5.2" fill="#5a5a5a" stroke="#f0f0f0" stroke-width="1.3"/><circle cx="675.6" cy="307.5" r="2.6" fill="#4a4a4a" stroke="#9a9a9a" stroke-width="1"/>
<rect x="528" y="315" width="298" height="19" fill="#5c5c5c"/>
<line x1="528" y1="333.5" x2="826" y2="333.5" stroke="#565656" stroke-width="1"/>
<line x1="665.5" y1="315" x2="665.5" y2="334" stroke="#565656" stroke-width="1"/>
<line x1="825.5" y1="315" x2="825.5" y2="334" stroke="#565656" stroke-width="1"/>
<text transform="translate(536.4,330.3) scale(1,1.08)" x="0" y="0" font-size="12" fill="#ececec" font-weight="normal" textLength="46.5" lengthAdjust="spacingAndGlyphs" stroke="#ececec" stroke-width="0.12" >Diameter</text>
<text transform="translate(669.5,330.3) scale(1,1.08)" x="0" y="0" font-size="12" fill="#ececec" font-weight="normal" textLength="13" lengthAdjust="spacingAndGlyphs" stroke="#ececec" stroke-width="0.12" >63</text>
<path d="M794.5 330 V321.5 H799" stroke="#ececec" stroke-width="1.2" fill="none"/>
<rect x="797" y="323.5" width="7" height="7" fill="#ececec"/><path d="M797 325.8 h7 M797 328.1 h7 M799.3 323.5 v7 M801.6 323.5 v7" stroke="#5c5c5c" stroke-width="0.7"/>
<rect x="813.5" y="325.5" width="7.5" height="5" fill="#e6e6e6"/><path d="M815 325.5 v-2 a2.3 2.3 0 0 1 4.6 0" stroke="#e6e6e6" stroke-width="1.2" fill="none"/><rect x="816.7" y="327" width="1.2" height="2" fill="#5a5a5a"/>
<rect x="547" y="353" width="279" height="19" fill="#5c5c5c"/>
<line x1="547" y1="371.5" x2="826" y2="371.5" stroke="#565656" stroke-width="1"/>
<line x1="665.5" y1="353" x2="665.5" y2="372" stroke="#565656" stroke-width="1"/>
<line x1="825.5" y1="353" x2="825.5" y2="372" stroke="#565656" stroke-width="1"/>
<text transform="translate(553.2,368.3) scale(1,1.08)" x="0" y="0" font-size="12" fill="#ececec" font-weight="normal" textLength="51.1" lengthAdjust="spacingAndGlyphs" stroke="#ececec" stroke-width="0.12" >Flow Rate</text>
<text transform="translate(669.5,368.3) scale(1,1.08)" x="0" y="0" font-size="12" fill="#ececec" font-weight="normal" textLength="23.8" lengthAdjust="spacingAndGlyphs" stroke="#ececec" stroke-width="0.12" >0 l/s</text>
<rect x="547" y="372" width="279" height="19" fill="#5c5c5c"/>
<line x1="547" y1="390.5" x2="826" y2="390.5" stroke="#565656" stroke-width="1"/>
<line x1="665.5" y1="372" x2="665.5" y2="391" stroke="#565656" stroke-width="1"/>
<line x1="825.5" y1="372" x2="825.5" y2="391" stroke="#565656" stroke-width="1"/>
<text transform="translate(553.2,387.3) scale(1,1.08)" x="0" y="0" font-size="12" fill="#ececec" font-weight="normal" textLength="39" lengthAdjust="spacingAndGlyphs" stroke="#ececec" stroke-width="0.12" >Friction</text>
<text transform="translate(669,387.3) scale(1,1.08)" x="0" y="0" font-size="12" fill="#a6a6a6" font-weight="normal" textLength="69.4" lengthAdjust="spacingAndGlyphs" stroke="#a6a6a6" stroke-width="0.12" >0.6541 Pa/m</text>
<rect x="547" y="391" width="279" height="19" fill="#5c5c5c"/>
<line x1="547" y1="409.5" x2="826" y2="409.5" stroke="#565656" stroke-width="1"/>
<line x1="665.5" y1="391" x2="665.5" y2="410" stroke="#565656" stroke-width="1"/>
<line x1="825.5" y1="391" x2="825.5" y2="410" stroke="#565656" stroke-width="1"/>
<text transform="translate(553.2,406.3) scale(1,1.08)" x="0" y="0" font-size="12" fill="#ececec" font-weight="normal" textLength="41.9" lengthAdjust="spacingAndGlyphs" stroke="#ececec" stroke-width="0.12" >Velocity</text>
<text transform="translate(669,406.3) scale(1,1.08)" x="0" y="0" font-size="12" fill="#a6a6a6" font-weight="normal" textLength="38.5" lengthAdjust="spacingAndGlyphs" stroke="#a6a6a6" stroke-width="0.12" >--- m/s</text>
<rect x="528" y="410" width="298" height="19" fill="#5c5c5c"/>
<line x1="528" y1="428.5" x2="826" y2="428.5" stroke="#565656" stroke-width="1"/>
<line x1="665.5" y1="410" x2="665.5" y2="429" stroke="#565656" stroke-width="1"/>
<line x1="825.5" y1="410" x2="825.5" y2="429" stroke="#565656" stroke-width="1"/>
<text transform="translate(536.4,425.3) scale(1,1.08)" x="0" y="0" font-size="12" fill="#ececec" font-weight="normal" textLength="53.7" lengthAdjust="spacingAndGlyphs" stroke="#ececec" stroke-width="0.12" >Cut length</text>
<text transform="translate(669,425.3) scale(1,1.08)" x="0" y="0" font-size="12" fill="#a6a6a6" font-weight="normal" textLength="37.8" lengthAdjust="spacingAndGlyphs" stroke="#a6a6a6" stroke-width="0.12" >8401.9</text>
<rect x="528" y="448" width="298" height="19" fill="#5c5c5c"/>
<line x1="528" y1="466.5" x2="826" y2="466.5" stroke="#565656" stroke-width="1"/>
<line x1="665.5" y1="448" x2="665.5" y2="467" stroke="#565656" stroke-width="1"/>
<line x1="825.5" y1="448" x2="825.5" y2="467" stroke="#565656" stroke-width="1"/>
<text transform="translate(536.4,463.3) scale(1,1.08)" x="0" y="0" font-size="12" fill="#ececec" font-weight="normal" textLength="47.1" lengthAdjust="spacingAndGlyphs" stroke="#ececec" stroke-width="0.12" >Elevation</text>
<text transform="translate(669.5,463.3) scale(1,1.08)" x="0" y="0" font-size="12" fill="#ececec" font-weight="normal" textLength="35.75" lengthAdjust="spacingAndGlyphs" stroke="#ececec" stroke-width="0.12" >UCS : 0</text>
<rect x="528" y="467" width="298" height="19" fill="#5c5c5c"/>
<line x1="528" y1="485.5" x2="826" y2="485.5" stroke="#565656" stroke-width="1"/>
<line x1="665.5" y1="467" x2="665.5" y2="486" stroke="#565656" stroke-width="1"/>
<line x1="825.5" y1="467" x2="825.5" y2="486" stroke="#565656" stroke-width="1"/>
<text transform="translate(536.4,482.3) scale(1,1.08)" x="0" y="0" font-size="12" fill="#ececec" font-weight="normal" textLength="74.1" lengthAdjust="spacingAndGlyphs" stroke="#ececec" stroke-width="0.12" >Start elevation</text>
<text transform="translate(669.5,482.3) scale(1,1.08)" x="0" y="0" font-size="12" fill="#ececec" font-weight="normal" textLength="35.75" lengthAdjust="spacingAndGlyphs" stroke="#ececec" stroke-width="0.12" >UCS : 0</text>
<rect x="528" y="486" width="298" height="19" fill="#5c5c5c"/>
<line x1="528" y1="504.5" x2="826" y2="504.5" stroke="#565656" stroke-width="1"/>
<line x1="665.5" y1="486" x2="665.5" y2="505" stroke="#565656" stroke-width="1"/>
<line x1="825.5" y1="486" x2="825.5" y2="505" stroke="#565656" stroke-width="1"/>
<text transform="translate(536.4,501.3) scale(1,1.08)" x="0" y="0" font-size="12" fill="#ececec" font-weight="normal" textLength="69.9" lengthAdjust="spacingAndGlyphs" stroke="#ececec" stroke-width="0.12" >End elevation</text>
<text transform="translate(669.5,501.3) scale(1,1.08)" x="0" y="0" font-size="12" fill="#ececec" font-weight="normal" textLength="35.75" lengthAdjust="spacingAndGlyphs" stroke="#ececec" stroke-width="0.12" >UCS : 0</text>
<rect x="528" y="505" width="298" height="19" fill="#5c5c5c"/>
<line x1="528" y1="523.5" x2="826" y2="523.5" stroke="#565656" stroke-width="1"/>
<line x1="665.5" y1="505" x2="665.5" y2="524" stroke="#565656" stroke-width="1"/>
<line x1="825.5" y1="505" x2="825.5" y2="524" stroke="#565656" stroke-width="1"/>
<text transform="translate(536.4,520.3) scale(1,1.08)" x="0" y="0" font-size="12" fill="#ececec" font-weight="normal" textLength="123.6" lengthAdjust="spacingAndGlyphs" stroke="#ececec" stroke-width="0.12" >Move attached  segm...</text>
<text transform="translate(669.5,520.3) scale(1,1.08)" x="0" y="0" font-size="12" fill="#ececec" font-weight="normal" textLength="17.75" lengthAdjust="spacingAndGlyphs" stroke="#ececec" stroke-width="0.12" >Yes</text>
<rect x="528" y="524" width="298" height="19" fill="#5c5c5c"/>
<line x1="528" y1="542.5" x2="826" y2="542.5" stroke="#565656" stroke-width="1"/>
<line x1="665.5" y1="524" x2="665.5" y2="543" stroke="#565656" stroke-width="1"/>
<line x1="825.5" y1="524" x2="825.5" y2="543" stroke="#565656" stroke-width="1"/>
<text transform="translate(686.25,539.3) scale(1,1.08)" x="0" y="0" font-size="12" fill="#ececec" font-weight="normal" textLength="119.25" lengthAdjust="spacingAndGlyphs" stroke="#ececec" stroke-width="0.12" >Additional information</text>
<rect x="670" y="528.5" width="11" height="9.5" fill="#ececec"/><path d="M670.5 530.8 h10 M670.5 533 h10 M670.5 535.2 h10" stroke="#5a5a5a" stroke-width="0.9"/>
<rect x="512.5" y="163.5" width="313" height="19" fill="#4b4b4b" stroke="#333333" stroke-width="1"/>
<line x1="513" y1="164.8" x2="825" y2="164.8" stroke="#555555" stroke-width="1"/>
<text transform="translate(519.6,177.3) scale(1,1.08)" x="0" y="0" font-size="12" fill="#f4f4f4" font-weight="bold" textLength="34" lengthAdjust="spacingAndGlyphs" >BASIC</text>
<rect x="812" y="171.5" width="7.5" height="2.2" fill="#f2f2f2"/>
<rect x="512.5" y="182.5" width="313" height="19" fill="#4b4b4b" stroke="#333333" stroke-width="1"/>
<line x1="513" y1="183.8" x2="825" y2="183.8" stroke="#555555" stroke-width="1"/>
<text transform="translate(519.6,196.3) scale(1,1.08)" x="0" y="0" font-size="12" fill="#f4f4f4" font-weight="bold" textLength="43.8" lengthAdjust="spacingAndGlyphs" >General</text>
<rect x="812" y="190.5" width="7.5" height="2.2" fill="#f2f2f2"/>
<rect x="512.5" y="258.5" width="313" height="19" fill="#4b4b4b" stroke="#333333" stroke-width="1"/>
<line x1="513" y1="259.8" x2="825" y2="259.8" stroke="#555555" stroke-width="1"/>
<text transform="translate(519.6,272.3) scale(1,1.08)" x="0" y="0" font-size="12" fill="#f4f4f4" font-weight="bold" textLength="63.9" lengthAdjust="spacingAndGlyphs" >Dimensions</text>
<rect x="812" y="266.5" width="7.5" height="2.2" fill="#f2f2f2"/>
<rect x="529.5" y="334.5" width="296" height="19" fill="#4b4b4b" stroke="#333333" stroke-width="1"/>
<line x1="530" y1="335.8" x2="825" y2="335.8" stroke="#555555" stroke-width="1"/>
<text transform="translate(536,348.3) scale(1,1.08)" x="0" y="0" font-size="12" fill="#f4f4f4" font-weight="bold" textLength="33.3" lengthAdjust="spacingAndGlyphs" >Sizing</text>
<rect x="812" y="342.5" width="7.5" height="2.2" fill="#f2f2f2"/>
<rect x="512.5" y="429.5" width="313" height="19" fill="#4b4b4b" stroke="#333333" stroke-width="1"/>
<line x1="513" y1="430.8" x2="825" y2="430.8" stroke="#555555" stroke-width="1"/>
<text transform="translate(519.6,443.3) scale(1,1.08)" x="0" y="0" font-size="12" fill="#f4f4f4" font-weight="bold" textLength="58.4" lengthAdjust="spacingAndGlyphs" >Placement</text>
<rect x="812" y="437.5" width="7.5" height="2.2" fill="#f2f2f2"/>
<path d="M1063.6 628.8 H1107.3 L1102.7 641 H1059.7 Z" fill="#5fae8c"/>
<path d="M1055.8 647.5 H1090 L1085.5 662.3 H1052.7 Z" fill="#5fae8c"/>
<path d="M1051 668.1 H1069.8 L1066.3 681 H1048 Z" fill="#5fae8c"/>
<text x="1104" y="665.5" font-size="31" font-weight="bold" fill="#0a0a0a" stroke="#bdbdbd" stroke-width="2.2" paint-order="stroke" textLength="86" lengthAdjust="spacingAndGlyphs">FILECR</text>
<text x="1180.5" y="677.3" font-size="18" font-weight="bold" fill="#0a0a0a" stroke="#c4c4c4" stroke-width="2" paint-order="stroke" textLength="30" lengthAdjust="spacingAndGlyphs">.com</text>
</svg></body></html>
